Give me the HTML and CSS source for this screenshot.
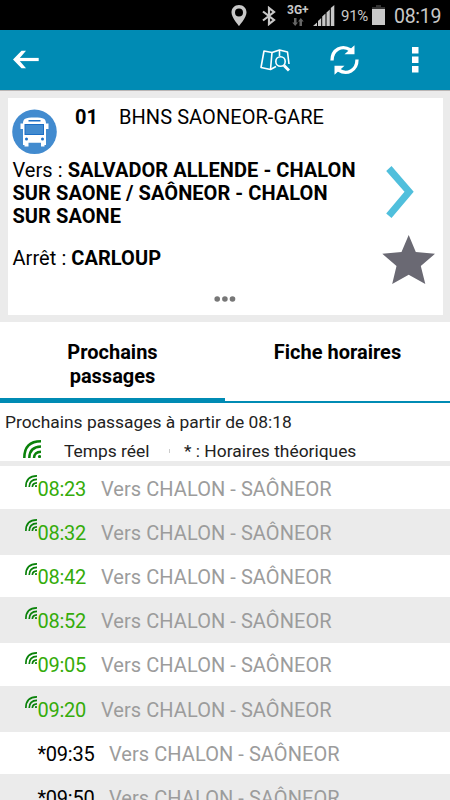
FILE: index.html
```
<!DOCTYPE html>
<html lang="fr">
<head>
  <meta charset="UTF-8">
  <title>Prochains passages</title>
  <meta name="viewport" content="width=device-width, initial-scale=1.0">
  <link rel="stylesheet" href="styles.css">
</head>
<body>
  <svg class="sprite" width="0" height="0">
    <symbol id="live" viewBox="0 0 18 18">
      <g fill="none" stroke="currentColor" stroke-width="2.500">
        <path d="M1.300 18 C1.300 7 7 1.300 18 1.300"/>
        <path d="M6.300 18 C6.500 10.500 10 6.800 18 6.600"/>
        <path d="M11 18 C11.200 14 13 12 18 11.800"/>
      </g>
      <circle cx="16.500" cy="16.500" r="1.600" fill="currentColor"/>
    </symbol>
  </svg>

  <div class="status">
    <svg class="pin" width="16" height="21" viewBox="0 0 16 21"><path fill="#c8c8c8" fill-rule="evenodd" d="M8 0 C3.500 0 .5 3.300 .5 7.500 C.5 12.500 8 21 8 21 S15.500 12.500 15.500 7.500 C15.500 3.300 12.500 0 8 0 Z M8 3.500 A4 4 0 1 1 8 11.500 A4 4 0 1 1 8 3.500 Z"/></svg>
    <svg class="bt" width="14" height="20" viewBox="0 0 14 20"><path fill="none" stroke="#c8c8c8" stroke-width="2.200" d="M1 5.500 L12 14 L7 18 V2 L12 6 L1 14.500"/></svg>
    <div class="net">
      <span>3G+</span>
      <svg width="12" height="8" viewBox="0 0 12 8"><path fill="#666" d="M2 0 H4.500 V4.500 H6 L3.200 8 L.3 4.500 H2 Z M7.500 8 H10 V3.500 H11.700 L8.800 0 L6 3.500 H7.500 Z"/></svg>
    </div>
    <svg class="signal" width="22" height="21" viewBox="0 0 22 21"><path fill="#c8c8c8" d="M0 21 L4 17.500 V21 Z M5 21 V16 L8.200 13 V21 Z M9.200 21 V11.500 L12.500 8.500 V21 Z M13.500 21 V7.500 L16.800 4.500 V21 Z M17.800 21 V3 L21.300 0 V21 Z"/></svg>
    <span class="percent">91%</span>
    <svg class="battery" width="13" height="20" viewBox="0 0 13 20"><path fill="#333" d="M4 0 H9 V2 H13 V4 H0 V2 H4 Z"/><path fill="#c8c8c8" d="M0 4 H13 V20 H0 Z"/></svg>
    <span class="clock">08:19</span>
  </div>

  <header class="toolbar">
    <svg class="back" width="27" height="19" viewBox="0 0 27 19"><path fill="none" stroke="#fff" stroke-width="3.200" d="M25.700 9.500 H3"/><path fill="#fff" d="M0 9.500 L8.500 .8 H13 L5.500 9.500 L13 18.200 H8.500 Z"/></svg>
    <svg class="map" width="30" height="23" viewBox="0 0 30 23">
      <g fill="none" stroke="#fff" stroke-width="1.600" stroke-linejoin="round">
        <path d="M16 17.500 L10.500 20.500 L1 18.500 L4 2 L12 3.500 L19.500 1 L27.500 3 L29 15"/>
        <path d="M12 3.500 L10.500 20.500 M19.500 1 V7"/>
        <circle cx="20.500" cy="12.500" r="4.700"/>
      </g>
      <path stroke="#fff" stroke-width="3" d="M24 16.500 L29 21.500"/>
    </svg>
    <svg class="refresh" width="29" height="30" viewBox="0 0 29 30">
      <g fill="none" stroke="#fff" stroke-width="3.300">
        <path d="M2 15.500 C2 4.500 12 -.5 20.500 5"/>
        <path d="M27 14.500 C27 25.500 17 30.500 8.500 25"/>
      </g>
      <path fill="#fff" d="M24.500 .3 V9.300 H14.500 Z M4.500 29.700 V20.700 H14.500 Z"/>
    </svg>
    <svg class="more" width="7" height="27" viewBox="0 0 7 27"><path fill="#fff" d="M0 0 H6.500 V6.500 H0 Z M0 9.500 H6.500 V16 H0 Z M0 19 H6.500 V25.500 H0 Z"/></svg>
  </header>

  <section class="line-wrap">
    <div class="line-card">
      <div class="line-head">
        <svg class="bus" width="45" height="46" viewBox="0 0 45 46">
          <circle cx="22.500" cy="22.800" r="22.300" fill="#428bcf"/>
          <path fill="#fff" d="M11 36 V20 H8.500 V14.500 H11 C11 10 13 8.500 22.500 8.500 S34 10 34 14.500 H36.500 V20 H34 V36 H32.500 V37.500 H29 V33.700 H16.500 V37.500 H12.500 V36 Z"/>
          <path fill="#1c6fc6" d="M12.500 15 H32 V26 H12.500 Z M16.500 11 H28.500 V12.500 H16.500 Z"/>
          <path fill="#428bcf" d="M13.500 16 H31 V25 H13.500 Z"/>
          <circle cx="14.500" cy="30" r="1.500" fill="#1c6fc6"/><circle cx="30.500" cy="30" r="1.500" fill="#1c6fc6"/>
        </svg>
        <b class="line-number">01</b>
        <span class="line-name">BHNS SAONEOR-GARE</span>
      </div>
      <div class="line-body">
        <div class="line-text">
          <div>Vers : <b>SALVADOR ALLENDE - CHALON<br>SUR SAONE / SAÔNEOR - CHALON<br>SUR SAONE</b></div>
          <div class="stop">Arrêt : <b>CARLOUP</b></div>
        </div>
        <div class="line-actions">
          <svg class="chevron" width="28" height="52" viewBox="0 0 28 52"><path fill="#50bfdc" d="M.2 5 L5.500 0 L27.700 25.800 L5.500 52 L.2 47.500 L18.500 25.800 Z"/></svg>
          <svg class="star" width="54" height="50" viewBox="0 0 54 50"><path fill="#6a6973" d="M26.700 0 L33.800 17 L53 18.800 L38.800 31 L43.300 49 L26.700 39.700 L10.200 49 L14.500 31 L.3 18.800 L19.500 17 Z"/></svg>
        </div>
      </div>
      <svg class="dots" width="22" height="6" viewBox="0 0 22 6"><g fill="#777"><circle cx="3.200" cy="3" r="2.800"/><circle cx="10.900" cy="3" r="2.800"/><circle cx="18.500" cy="3" r="2.800"/></g></svg>
    </div>
  </section>

  <nav class="tabs">
    <div class="tab active">Prochains<br>passages</div>
    <div class="tab">Fiche horaires</div>
  </nav>

  <section class="info">
    <div class="from">Prochains passages à partir de 08:18</div>
    <div class="legend">
      <svg class="legend-icon" width="18" height="18"><use href="#live"/></svg>
      <span class="realtime">Temps réel</span>
      <span class="sep"></span>
      <span class="theory">* : Horaires théoriques</span>
    </div>
  </section>

  <div class="list">
    <div class="row"><svg class="live" width="12" height="12"><use href="#live"/></svg><span class="time">08:23</span><span class="dest">Vers CHALON - SAÔNEOR</span></div>
    <div class="row"><svg class="live" width="12" height="12"><use href="#live"/></svg><span class="time">08:32</span><span class="dest">Vers CHALON - SAÔNEOR</span></div>
    <div class="row"><svg class="live" width="12" height="12"><use href="#live"/></svg><span class="time">08:42</span><span class="dest">Vers CHALON - SAÔNEOR</span></div>
    <div class="row"><svg class="live" width="12" height="12"><use href="#live"/></svg><span class="time">08:52</span><span class="dest">Vers CHALON - SAÔNEOR</span></div>
    <div class="row"><svg class="live" width="12" height="12"><use href="#live"/></svg><span class="time">09:05</span><span class="dest">Vers CHALON - SAÔNEOR</span></div>
    <div class="row"><svg class="live" width="12" height="12"><use href="#live"/></svg><span class="time">09:20</span><span class="dest">Vers CHALON - SAÔNEOR</span></div>
    <div class="row planned"><span class="time">*09:35</span><span class="dest">Vers CHALON - SAÔNEOR</span></div>
    <div class="row planned"><span class="time">*09:50</span><span class="dest">Vers CHALON - SAÔNEOR</span></div>
  </div>
</body>
</html>
```
FILE: styles.css
```
* {
  box-sizing: border-box;
}
body {
  margin: 0;
  height: 800px;
  overflow: hidden;
  background: #fff;
  color: #000;
  font-family: Roboto, sans-serif;
  font-size: 20px;
  line-height: 23.3px;
  display: flex;
  flex-direction: column;
}
svg {
  display: block;
  flex: none;
}
.sprite {
  position: absolute;
}

/* status bar */
.status {
  flex: none;
  height: 30px;
  background: #000;
  color: #c8c8c8;
  display: flex;
  align-items: flex-start;
  padding-left: 231px;
  white-space: nowrap;
}
.pin {
  margin-top: 5px;
}
.bt {
  margin: 6px 0 0 15px;
}
.net {
  width: 23px;
  margin: 4px 0 0 11px;
  font-size: 12px;
  font-weight: bold;
  line-height: 12px;
}
.net svg {
  margin: 2px 0 0 5px;
}
.signal {
  margin: 5px 0 0 3px;
}
.percent {
  width: 28px;
  margin: 5px 0 0 6px;
  font-size: 15px;
  letter-spacing: -0.3px;
}
.battery {
  margin: 5px 0 0 3px;
}
.clock {
  margin: 5px 0 0 9px;
  font-size: 19.5px;
  letter-spacing: -0.3px;
}

/* toolbar */
.toolbar {
  flex: none;
  height: 60px;
  background: #008bb4;
  display: flex;
  align-items: center;
  padding-left: 13px;
}
.back {
  margin-top: -2px;
}
.map {
  margin-left: 220px;
}
.refresh {
  margin-left: 40px;
}
.more {
  margin-left: 53px;
}

/* line card */
.line-wrap {
  flex: none;
  height: 232.300px;
  padding: 6.500px 7.500px 7.500px;
  background: #ebebeb;
  border-top: 1px solid #b9b5b4;
}
.line-card {
  height: 217.500px;
  padding: 0 5px;
  background: #fff;
  display: flex;
  flex-direction: column;
}
.line-head {
  display: flex;
  height: 61px;
  padding-top: 8px;
}
.bus {
  margin: 3.500px 0 0 -0.500px;
}
.line-number {
  width: 44px;
  margin-left: 18px;
}
.line-name {
  letter-spacing: 0.06px;
}
.line-body {
  display: flex;
  height: 137.500px;
}
.line-text {
  width: 370px;
  letter-spacing: 0.06px;
  white-space: nowrap;
}
.stop {
  margin-top: 19px;
}
.line-actions {
  padding-top: 7px;
}
.chevron {
  margin-left: 3.500px;
}
.star {
  margin: 17px 0 0 -1px;
}
.dots {
  align-self: center;
}

/* tabs */
.tabs {
  flex: none;
  height: 80.700px;
  display: flex;
  font-weight: bold;
  text-align: center;
}
.tab {
  width: 225px;
  padding-top: 19px;
  border-bottom: 2px solid #008bb4;
}
.tab.active {
  border-bottom-width: 5px;
}

/* info and legend */
.info {
  flex: none;
  height: 63.500px;
  padding-top: 8px;
  border-bottom: 5px solid #ebebeb;
  color: #222;
  font-size: 17.400px;
}
.from {
  padding-left: 5px;
}
.legend {
  display: flex;
  margin-top: 5.500px;
  padding-left: 23px;
}
.legend-icon {
  margin-top: 0.500px;
  color: #0a820a;
}
.realtime {
  width: 104px;
  margin-left: 23px;
}
.sep {
  width: 1px;
  height: 4px;
  margin: 9px 14px 0 1px;
  background: #ccc;
}

/* departures */
.list {
  flex: 1;
}
.row {
  height: 42.600px;
  padding: 3px 0 0 25px;
  display: flex;
  align-items: center;
  white-space: nowrap;
}
.row:nth-child(even) {
  height: 45.800px;
  background: #ebebeb;
}
.live {
  margin-top: -17px;
  color: #0a820a;
}
.time {
  width: 49px;
  margin-left: 0.500px;
  letter-spacing: -0.25px;
  color: #35ac0a;
}
.dest {
  margin-left: 14.500px;
  letter-spacing: 0.06px;
  color: #9c9c9c;
}
.planned .time {
  width: 57px;
  margin-left: 12.500px;
  color: #000;
}
```
